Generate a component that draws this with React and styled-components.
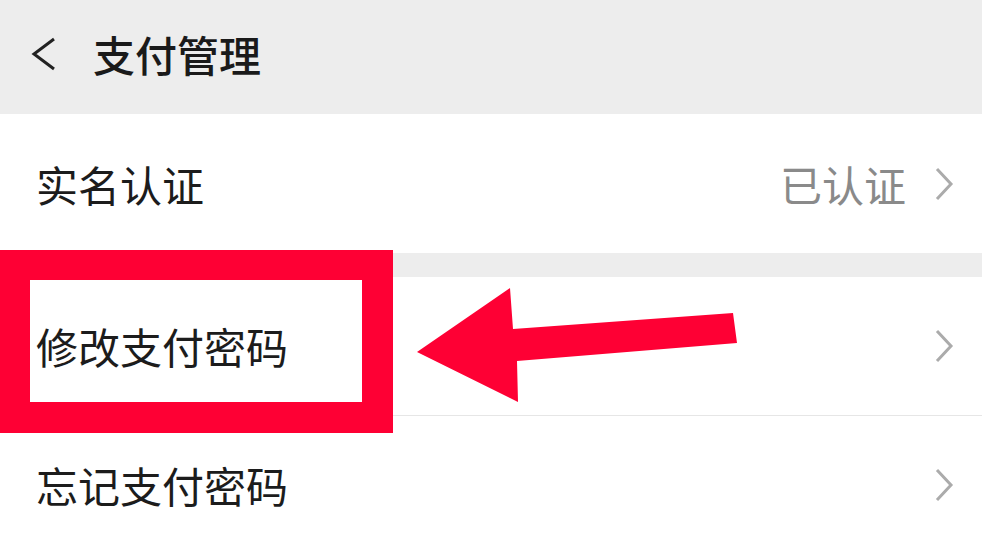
import React from "react";
import styled, { createGlobalStyle } from "styled-components";

const Global = createGlobalStyle`
  html, body { margin: 0; padding: 0; background: #ffffff; }
  body { font-family: "Noto Sans CJK SC", "Noto Sans", sans-serif; }
  * { box-sizing: border-box; }
`;

const Page = styled.div`
  position: relative;
  width: 982px;
  height: 533px;
  overflow: hidden;
  background: #ffffff;
  display: flex;
  flex-direction: column;
`;

const Header = styled.header`
  height: 114px;
  flex: none;
  background: #ededed;
  display: flex;
  align-items: center;
  padding: 0 0 6px 31px;
  gap: 36px;
`;

const Title = styled.h1`
  margin: 0;
  font-size: 42px;
  font-weight: 500;
  color: #1a1a1a;
  line-height: 1;
  letter-spacing: 0;
`;

const Row = styled.div`
  height: ${(p) => p.$h}px;
  flex: none;
  display: flex;
  align-items: center;
  justify-content: space-between;
  padding: 0 28px 0 36px;
  background: #ffffff;
  border-bottom: ${(p) => (p.$line ? "1px solid #e6e6e6" : "none")};
`;

const Label = styled.span`
  font-size: 42px;
  line-height: 1;
  color: #1c1c1c;
`;

const Right = styled.div`
  display: flex;
  align-items: center;
  gap: 28px;
`;

const Value = styled.span`
  font-size: 42px;
  line-height: 1;
  color: #8a8a8a;
`;

const Gap = styled.div`
  height: 24px;
  flex: none;
  background: #ededed;
`;

const Highlight = styled.div`
  position: absolute;
  left: 0;
  top: 250px;
  width: 393px;
  height: 183px;
  border: 30px solid #fe0034;
  border-right-width: 31px;
  border-bottom-width: 31px;
  pointer-events: none;
`;

const ArrowSvg = styled.svg`
  position: absolute;
  left: 0;
  top: 0;
  pointer-events: none;
`;

const Back = () => (
  <svg width="26" height="34" viewBox="0 0 26 34">
    <polyline points="23,2 3,17 23,32" fill="none" stroke="#222" strokeWidth="3" strokeLinejoin="miter" />
  </svg>
);

const Chevron = () => (
  <svg width="20" height="34" viewBox="0 0 20 34">
    <polyline points="3,2 17,17 3,32" fill="none" stroke="#ababab" strokeWidth="3" />
  </svg>
);

export default function App() {
  return (
    <>
      <Global />
      <Page>
        <Header>
          <Back />
          <Title>支付管理</Title>
        </Header>
        <Row $h={139}>
          <Label>实名认证</Label>
          <Right>
            <Value>已认证</Value>
            <Chevron />
          </Right>
        </Row>
        <Gap />
        <Row $h={139} $line>
          <Label>修改支付密码</Label>
          <Chevron />
        </Row>
        <Row $h={138}>
          <Label>忘记支付密码</Label>
          <Chevron />
        </Row>
        <Highlight />
        <ArrowSvg width="982" height="533" viewBox="0 0 982 533">
          <polygon
            points="417,352 510,288 513,329 733,313 737,343 517,361 518,402"
            fill="#fe0034"
          />
        </ArrowSvg>
      </Page>
    </>
  );
}
